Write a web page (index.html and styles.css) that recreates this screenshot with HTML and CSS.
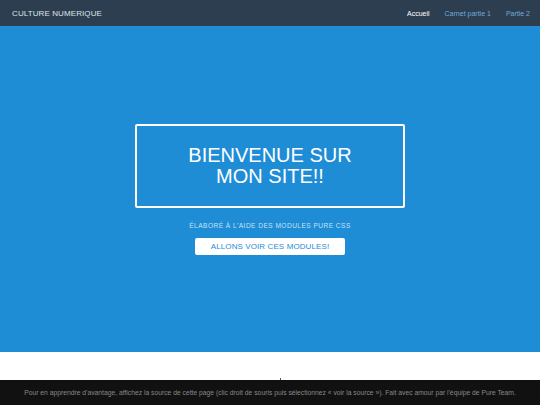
FILE: index.html
```html
<!DOCTYPE html>
<html lang="fr">
<head>
<meta charset="utf-8">
<title>Culture numerique</title>
<link rel="stylesheet" href="styles.css">
</head>
<body>
<header class="menu">
  <a class="brand" href="#">CULTURE NUMERIQUE</a>
  <nav class="nav">
    <a class="nav-link active" href="#">Accueil</a>
    <a class="nav-link" href="#">Carnet partie 1</a>
    <a class="nav-link" href="#">Partie 2</a>
  </nav>
</header>
<main class="splash-container">
  <div class="splash">
    <h1 class="splash-head">BIENVENUE SUR<br>MON SITE!!</h1>
    <p class="splash-sub">ÉLABORÉ À L'AIDE DES MODULES PURE CSS</p>
    <a class="button" href="#">ALLONS VOIR CES MODULES!</a>
  </div>
</main>
<section class="content"><span class="tick"></span></section>
<footer class="footer">Pour en apprendre d'avantage, affichez la source de cette page (clic droit de souris puis sélectionnez « voir la source »). Fait avec amour par l'équipe de Pure Team.</footer>
</body>
</html>
```
FILE: styles.css
```css
html, body {
  margin: 0;
  padding: 0;
}
body {
  width: 540px;
  height: 405px;
  font-family: "Liberation Sans", Arial, sans-serif;
  display: flex;
  flex-direction: column;
  overflow: hidden;
}
.menu {
  height: 26px;
  flex: none;
  background: #2d3e50;
  display: flex;
  align-items: center;
  justify-content: space-between;
  padding: 0 10px 0 12px;
}
.brand {
  color: #dfe4ea;
  font-size: 8px;
  text-decoration: none;
  letter-spacing: 0.1px;
}
.nav {
  display: flex;
  gap: 15px;
}
.nav-link {
  color: #6fa9d9;
  font-size: 7px;
  text-decoration: none;
}
.nav-link.active {
  color: #ffffff;
}
.splash-container {
  flex: none;
  height: 326px;
  background: #1f8dd6;
  display: flex;
  justify-content: center;
  align-items: flex-start;
}
.splash {
  margin-top: 98px;
  display: flex;
  flex-direction: column;
  align-items: center;
}
.splash-head {
  box-sizing: border-box;
  width: 270px;
  height: 84px;
  margin: 0;
  border: 2px solid #ffffff;
  border-radius: 2px;
  color: #ffffff;
  font-weight: normal;
  font-size: 20px;
  line-height: 21px;
  text-align: center;
  display: flex;
  align-items: center;
  justify-content: center;
}
.splash-sub {
  margin: 14px 0 0;
  color: #c6e2f5;
  font-size: 6.6px;
  letter-spacing: 0.45px;
  line-height: 8px;
}
.button {
  margin-top: 8px;
  width: 150px;
  height: 17px;
  background: #ffffff;
  border-radius: 2px;
  color: #1f8dd6;
  font-size: 8px;
  text-decoration: none;
  display: flex;
  align-items: center;
  justify-content: center;
  letter-spacing: 0.1px;
}
.content {
  flex: none;
  height: 28px;
  background: #ffffff;
  position: relative;
}
.tick {
  position: absolute;
  left: 280px;
  top: 26px;
  width: 1px;
  height: 2px;
  background: #555;
}
.footer {
  flex: 1;
  background: #111111;
  color: #888888;
  font-size: 6.75px;
  text-align: center;
  display: flex;
  align-items: center;
  justify-content: center;
  white-space: nowrap;
}
```
